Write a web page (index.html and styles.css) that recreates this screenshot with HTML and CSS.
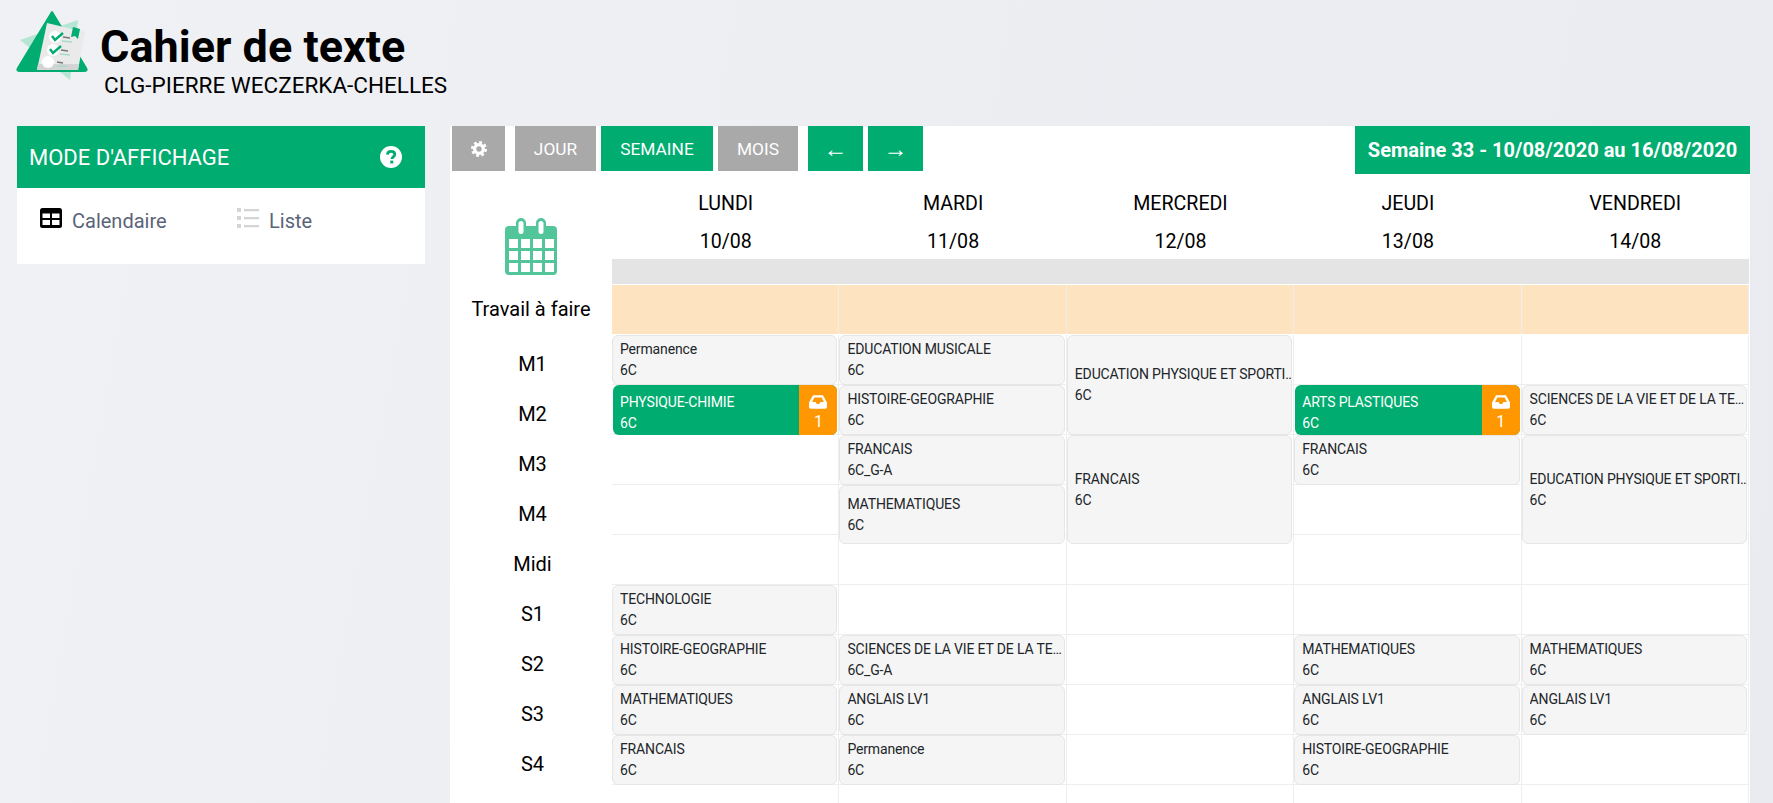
FILE: index.html
```html
<!DOCTYPE html>
<html lang="fr">
<head>
  <meta charset="UTF-8">
  <meta name="viewport" content="width=device-width, initial-scale=1.0">
  <title>Cahier de texte</title>
  <link rel="stylesheet" href="styles.css">
</head>
<body>
  <header class="top">
    <svg class="logo" viewBox="0 0 90 80" aria-hidden="true">
      <polygon points="10,34 68,14 60,74" fill="#b5e5d3"/>
      <path d="M42 6 L76 62 Q78 65 74 65 L10 65 Q6 65 8 62 Z" fill="#00ac6f" stroke="#00ac6f" stroke-width="2" stroke-linejoin="round"/>
      <polygon points="37,17 75,26 68,64 27,64" fill="#eaeaeb"/>
      <polygon points="28,58 69,58 68,64 27,64" fill="#d3d4d6"/>
      <polygon points="63,21 70,23 68,33 65,30 61,31" fill="#00ac6f"/>
      <circle cx="45" cy="31" r="6" fill="#fff"/>
      <circle cx="43" cy="44" r="6" fill="#fff"/>
      <circle cx="38" cy="56" r="6" fill="#fff"/>
      <path d="M42 30 L45 34 L53 27" fill="none" stroke="#00ac6f" stroke-width="2.4"/>
      <path d="M40 43 L43 47 L51 40" fill="none" stroke="#00ac6f" stroke-width="2.4"/>
      <path d="M53 31 L60 32 M51 44 L58 45 M47 56 L53 57" stroke="#777" stroke-width="1.6"/>
      <path d="M52 35 L62 36 M50 48 L60 49 M47 60 L57 60" stroke="#a6dcc6" stroke-width="1.6"/>
    </svg>
    <div class="titles">
      <h1>Cahier de texte</h1>
      <p class="school">CLG-PIERRE WECZERKA-CHELLES</p>
    </div>
  </header>

  <div class="layout">
    <aside class="sidebar">
      <div class="sidebar-head">
        <span>MODE D'AFFICHAGE</span>
        <svg class="help" viewBox="0 0 22 22" aria-hidden="true">
          <circle cx="11" cy="11" r="11" fill="#fff"/>
          <path d="M7.4 8.6 C7.6 6.5 9.1 5.4 11.1 5.4 C13.2 5.4 14.8 6.6 14.8 8.5 C14.8 10.8 12 10.9 11.9 13" fill="none" stroke="#00ac6f" stroke-width="2.7"/>
          <rect x="10.3" y="14.6" width="3" height="2.9" fill="#00ac6f"/>
        </svg>
      </div>
      <div class="modes">
        <div class="mode">
          <svg class="mode-icon" viewBox="0 0 22 20" aria-hidden="true">
            <rect width="22" height="20" rx="2.5" fill="#000"/>
            <rect x="2.5" y="5.5" width="7.5" height="4.5" fill="#fff"/>
            <rect x="12" y="5.5" width="7.5" height="4.5" fill="#fff"/>
            <rect x="2.5" y="12" width="7.5" height="5" fill="#fff"/>
            <rect x="12" y="12" width="7.5" height="5" fill="#fff"/>
          </svg>
          Calendaire
        </div>
        <div class="mode">
          <svg class="mode-icon" viewBox="0 0 22 20" aria-hidden="true">
            <path d="M0 0h4v4H0zM0 8h4v4H0zM0 16h4v4H0z" fill="#d4d4d4"/>
            <path d="M7 1h15v2.2H7zM7 9h15v2.2H7zM7 17h15v2.2H7z" fill="#d4d4d4"/>
          </svg>
          Liste
        </div>
      </div>
    </aside>

    <main class="agenda">
      <div class="toolbar">
        <button class="btn btn-gear" type="button">
          <svg class="gear" viewBox="0 0 24 24" aria-hidden="true">
            <circle cx="12" cy="12" r="6.5" fill="none" stroke="#fff" stroke-width="5"/>
            <circle cx="12" cy="12" r="10" fill="none" stroke="#fff" stroke-width="4" stroke-dasharray="4.2 3.65"/>
          </svg>
        </button>
        <button class="btn btn-jour" type="button">JOUR</button>
        <button class="btn btn-semaine active" type="button">SEMAINE</button>
        <button class="btn btn-mois" type="button">MOIS</button>
        <button class="btn btn-nav active" type="button">←</button>
        <button class="btn btn-nav active" type="button">→</button>
        <div class="week">Semaine 33 - 10/08/2020 au 16/08/2020</div>
      </div>

      <div class="planning">
        <div class="hours">
          <svg class="calendar" viewBox="0 0 52 57" aria-hidden="true">
            <path d="M4 8h7V5a5 5 0 0 1 10 0v3h10V5a5 5 0 0 1 10 0v3h7a4 4 0 0 1 4 4v41a4 4 0 0 1-4 4H4a4 4 0 0 1-4-4V12a4 4 0 0 1 4-4z" fill="#52c59a"/>
            <rect x="13.5" y="3" width="5" height="13" rx="2.5" fill="#fff"/>
            <rect x="33.5" y="3" width="5" height="13" rx="2.5" fill="#fff"/>
            <path fill="#fff" d="M4 21h9v9H4zM16 21h9v9h-9zM28 21h9v9h-9zM40 21h9v9h-9zM4 33h9v9H4zM16 33h9v9h-9zM28 33h9v9h-9zM40 33h9v9h-9zM4 45h9v9H4zM16 45h9v9h-9zM28 45h9v9h-9zM40 45h9v9h-9z"/>
          </svg>
          <div class="todo-label">Travail à faire</div>
          <div class="hour">M1</div>
          <div class="hour">M2</div>
          <div class="hour">M3</div>
          <div class="hour">M4</div>
          <div class="hour">Midi</div>
          <div class="hour">S1</div>
          <div class="hour">S2</div>
          <div class="hour">S3</div>
          <div class="hour">S4</div>
        </div>

        <section class="day">
          <div class="day-head"><div>LUNDI</div><div>10/08</div></div>
          <div class="day-bar"></div>
          <div class="day-todo"></div>
          <div class="slots">
            <div class="card at-1"><p>Permanence</p><p>6C</p></div>
            <div class="card green at-2">
              <div class="card-text"><p>PHYSIQUE-CHIMIE</p><p>6C</p></div>
              <div class="badge">
                <svg class="inbox" viewBox="0 0 20 15" aria-hidden="true"><path fill-rule="evenodd" d="M4.5 0h11L20 8v5a2 2 0 0 1-2 2H2a2 2 0 0 1-2-2V8zM6 2.4 3.4 7.6h4l1.2 2h2.8l1.2-2h4L14 2.4z" fill="#fff"/></svg>
                <span>1</span>
              </div>
            </div>
            <div class="card at-6"><p>TECHNOLOGIE</p><p>6C</p></div>
            <div class="card at-7"><p>HISTOIRE-GEOGRAPHIE</p><p>6C</p></div>
            <div class="card at-8"><p>MATHEMATIQUES</p><p>6C</p></div>
            <div class="card at-9"><p>FRANCAIS</p><p>6C</p></div>
          </div>
        </section>

        <section class="day">
          <div class="day-head"><div>MARDI</div><div>11/08</div></div>
          <div class="day-bar"></div>
          <div class="day-todo"></div>
          <div class="slots">
            <div class="card at-1"><p>EDUCATION MUSICALE</p><p>6C</p></div>
            <div class="card at-2"><p>HISTOIRE-GEOGRAPHIE</p><p>6C</p></div>
            <div class="card at-3"><p>FRANCAIS</p><p>6C_G-A</p></div>
            <div class="card at-4 tall"><p>MATHEMATIQUES</p><p>6C</p></div>
            <div class="card at-7"><p>SCIENCES DE LA VIE ET DE LA TERRE</p><p>6C_G-A</p></div>
            <div class="card at-8"><p>ANGLAIS LV1</p><p>6C</p></div>
            <div class="card at-9"><p>Permanence</p><p>6C</p></div>
          </div>
        </section>

        <section class="day">
          <div class="day-head"><div>MERCREDI</div><div>12/08</div></div>
          <div class="day-bar"></div>
          <div class="day-todo"></div>
          <div class="slots">
            <div class="card at-1 span-2"><p>EDUCATION PHYSIQUE ET SPORTIVE</p><p>6C</p></div>
            <div class="card at-3 span-2 tall"><p>FRANCAIS</p><p>6C</p></div>
          </div>
        </section>

        <section class="day">
          <div class="day-head"><div>JEUDI</div><div>13/08</div></div>
          <div class="day-bar"></div>
          <div class="day-todo"></div>
          <div class="slots">
            <div class="card green at-2">
              <div class="card-text"><p>ARTS PLASTIQUES</p><p>6C</p></div>
              <div class="badge">
                <svg class="inbox" viewBox="0 0 20 15" aria-hidden="true"><path fill-rule="evenodd" d="M4.5 0h11L20 8v5a2 2 0 0 1-2 2H2a2 2 0 0 1-2-2V8zM6 2.4 3.4 7.6h4l1.2 2h2.8l1.2-2h4L14 2.4z" fill="#fff"/></svg>
                <span>1</span>
              </div>
            </div>
            <div class="card at-3"><p>FRANCAIS</p><p>6C</p></div>
            <div class="card at-7"><p>MATHEMATIQUES</p><p>6C</p></div>
            <div class="card at-8"><p>ANGLAIS LV1</p><p>6C</p></div>
            <div class="card at-9"><p>HISTOIRE-GEOGRAPHIE</p><p>6C</p></div>
          </div>
        </section>

        <section class="day">
          <div class="day-head"><div>VENDREDI</div><div>14/08</div></div>
          <div class="day-bar"></div>
          <div class="day-todo"></div>
          <div class="slots">
            <div class="card at-2"><p>SCIENCES DE LA VIE ET DE LA TERRE</p><p>6C</p></div>
            <div class="card at-3 span-2 tall"><p>EDUCATION PHYSIQUE ET SPORTIVE</p><p>6C</p></div>
            <div class="card at-7"><p>MATHEMATIQUES</p><p>6C</p></div>
            <div class="card at-8"><p>ANGLAIS LV1</p><p>6C</p></div>
          </div>
        </section>
      </div>
    </main>
  </div>
</body>
</html>
```

FILE: styles.css
```css
* {
  box-sizing: border-box;
}

html,
body {
  height: 100%;
}

body {
  margin: 0;
  overflow: hidden;
  font-family: Roboto, "Liberation Sans", sans-serif;
  color: #000;
  background: linear-gradient(100deg, #f0f1f4, #e9ebf0);
}

p {
  margin: 0;
}

/* Header */
.top {
  display: flex;
  height: 126px;
  padding: 6px 0 0 10px;
}

.logo {
  width: 90px;
  height: 80px;
  flex: none;
}

.titles {
  padding: 16px 0 0 0;
}

h1 {
  margin: 0;
  font-size: 45px;
  line-height: 50px;
  font-weight: 700;
}

.school {
  margin-left: 4px;
  font-size: 22.5px;
  line-height: 26px;
}

.layout {
  display: flex;
  gap: 25px;
  padding-left: 17px;
}

/* Sidebar */
.sidebar {
  width: 408px;
  height: 138px;
  flex: none;
  background: #fff;
}

.sidebar-head {
  display: flex;
  align-items: center;
  justify-content: space-between;
  height: 62px;
  padding: 0 23px 0 12px;
  background: #00ac6f;
  color: #fff;
  font-size: 22px;
}

.help {
  width: 22px;
  height: 22px;
}

.modes {
  display: flex;
  padding: 21px 0 0 23px;
}

.mode {
  display: flex;
  align-items: center;
  flex: none;
  gap: 10px;
  width: 197px;
  color: #5a6478;
  font-size: 20px;
}

.mode-icon {
  width: 22px;
  height: 20px;
  margin-top: -7px;
}

/* Agenda */
.agenda {
  width: 1300px;
  height: 677px;
  background: #fff;
}

.toolbar {
  display: flex;
  align-items: flex-start;
  height: 48px;
  padding-left: 2px;
}

.btn {
  height: 45px;
  margin-right: 5px;
  border: none;
  background: #a9a9a9;
  color: #fff;
  font-family: inherit;
  font-size: 17.3px;
}

.btn.active {
  background: #00ac6f;
}

.btn-gear {
  width: 53px;
  margin-right: 10px;
}

.gear {
  width: 16px;
  height: 16px;
  display: block;
  margin: 0 auto;
}

.btn-jour {
  width: 81px;
}

.btn-semaine {
  width: 112px;
}

.btn-mois {
  width: 80px;
  margin-right: 10px;
}

.btn-nav {
  width: 55px;
  font-family: "Liberation Sans", sans-serif;
  font-size: 24px;
}

.week {
  width: 395px;
  height: 48px;
  margin-left: auto;
  background: #00ac6f;
  color: #fff;
  font-size: 20px;
  font-weight: 700;
  line-height: 48px;
  text-align: center;
}

.planning {
  display: grid;
  grid-template-columns: 162px repeat(5, 227.4px);
  color: #000;
}

.hours {
  display: flex;
  flex-direction: column;
  align-items: center;
  font-size: 20px;
}

.calendar {
  width: 52px;
  height: 57px;
  margin-top: 44px;
}

.todo-label {
  height: 60px;
  padding-top: 22px;
  line-height: 24px;
}

.hour {
  height: 50px;
  padding: 17px 0 0 3px;
  line-height: 24px;
}

.day-head {
  height: 85px;
  padding-top: 11px;
  font-size: 19.6px;
  line-height: 38px;
  text-align: center;
}

.day-bar {
  height: 25px;
  background: #e4e4e4;
}

.day-todo {
  height: 49px;
  margin: 1px 0;
  border-right: 1px solid #eee;
  background: #fde3c0;
}

.slots {
  display: grid;
  grid-template-rows: repeat(9, 50px);
  height: 468px;
  border-right: 1px solid #eee;
  background: repeating-linear-gradient(to bottom, transparent 0, transparent 49px, #eee 49px, #eee 50px);
}

/* Course cards */
.card {
  display: flex;
  flex-direction: column;
  justify-content: center;
  min-width: 0;
  margin-right: 1px;
  padding-left: 7px;
  overflow: hidden;
  border: 1px solid #e6e6e6;
  border-radius: 6px;
  background: #f5f5f5;
  color: #212529;
  font-size: 14px;
  letter-spacing: -0.15px;
  line-height: 21px;
}

.card p {
  margin-right: -5px;
  overflow: hidden;
  white-space: nowrap;
  text-overflow: ellipsis;
}

.at-1 { grid-row: 1; }
.at-2 { grid-row: 2; }
.at-3 { grid-row: 3; }
.at-4 { grid-row: 4; }
.at-6 { grid-row: 6; }
.at-7 { grid-row: 7; }
.at-8 { grid-row: 8; }
.at-9 { grid-row: 9; }

.span-2 {
  grid-row-end: span 2;
}

.tall {
  margin-bottom: -9px;
}

.green {
  flex-direction: row;
  align-items: stretch;
  margin-left: 1px;
  padding-left: 0;
  border: none;
  background: #00ac6f;
  color: #fff;
}

.card-text {
  flex: 1;
  padding: 7px 0 0 7px;
}

.badge {
  display: flex;
  flex-direction: column;
  align-items: center;
  width: 38px;
  padding-top: 10px;
  background: #ff9800;
  font-size: 16px;
  line-height: 26px;
}

.inbox {
  width: 18px;
  height: 14px;
  flex: none;
}
```
